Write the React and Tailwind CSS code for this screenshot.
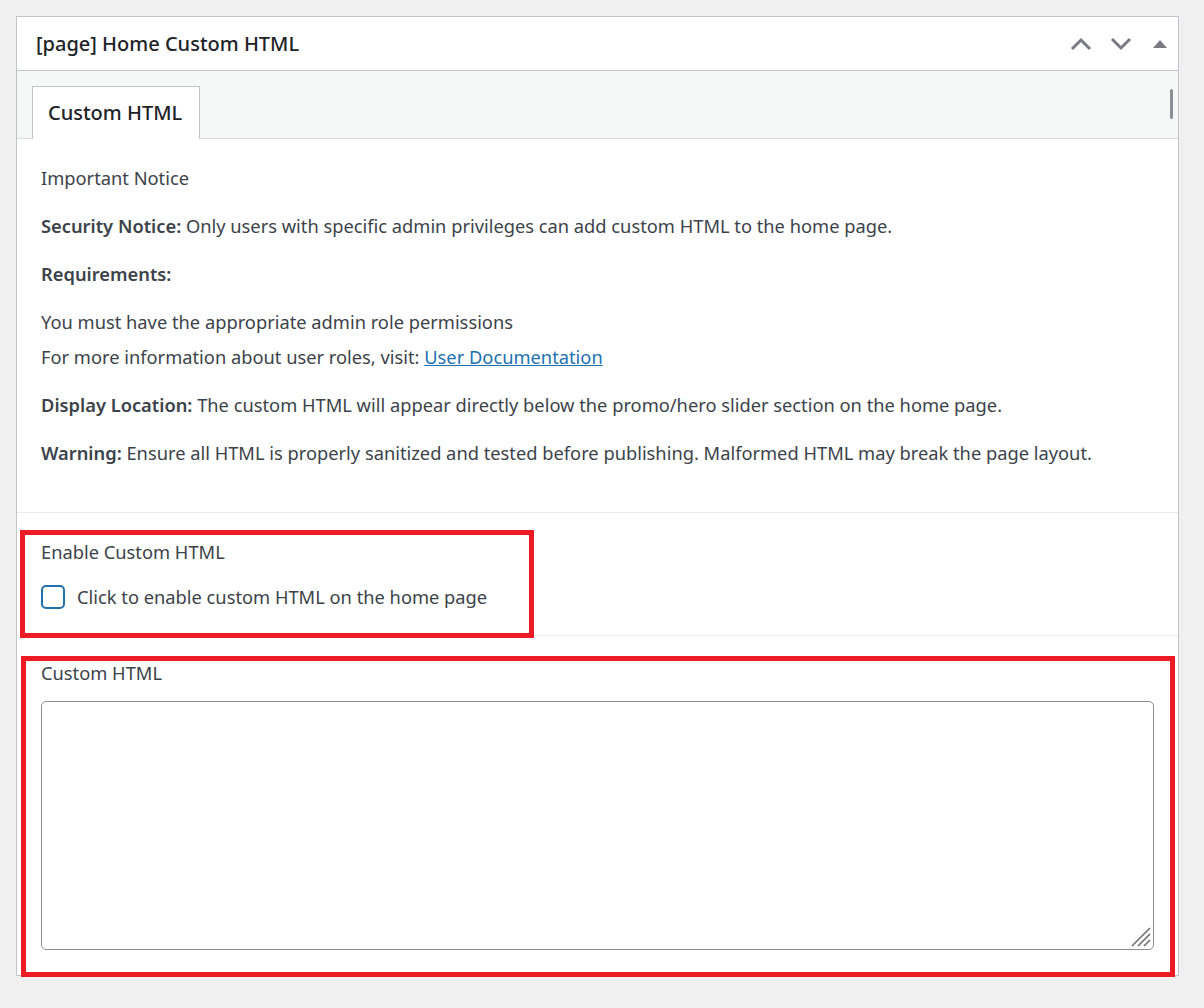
import React, { useState } from "react";

function ChevronUp() {
  return (
    <svg width="22" height="14" viewBox="0 0 22 14" fill="none">
      <path d="M2 12 L11 3 L20 12" stroke="#787c82" strokeWidth="3" />
    </svg>
  );
}

function ChevronDown() {
  return (
    <svg width="22" height="14" viewBox="0 0 22 14" fill="none">
      <path d="M2 2 L11 11 L20 2" stroke="#787c82" strokeWidth="3" />
    </svg>
  );
}

function TriangleUp() {
  return (
    <svg width="14" height="8" viewBox="0 0 14 8">
      <path d="M0 8 L7 0 L14 8 Z" fill="#787c82" />
    </svg>
  );
}

export default function App() {
  const [enabled, setEnabled] = useState(false);
  const [html, setHtml] = useState("");

  return (
    <div
      className="relative min-h-[1008px] bg-[#f0f0f1] pt-4 pl-4 text-[#3c434a]"
      style={{ fontFamily: '"Noto Sans", "Open Sans", sans-serif' }}
    >
      <div className="w-[1163px] border border-[#c3c4c7] bg-white">
        {/* Header */}
        <div className="flex h-[54px] items-center justify-between border-b border-[#c3c4c7] pl-[19px]">
          <h2 className="text-[20px] font-medium text-[#1d2327]">[page] Home Custom HTML</h2>
          <div className="flex items-center">
            <button className="flex h-9 w-10 items-center justify-center"><ChevronUp /></button>
            <button className="flex h-9 w-10 items-center justify-center"><ChevronDown /></button>
            <button className="flex h-9 w-[37px] items-center justify-center"><TriangleUp /></button>
          </div>
        </div>

        {/* Tabs */}
        <div className="relative h-[68px] border-b border-[#dcdcde] bg-[#f6f7f7] pl-[15px] pt-[15px]">
          <div className="-mb-px flex h-[53px] w-[168px] items-center border border-b-0 border-[#c3c4c7] bg-white pl-[15px] text-[20px] font-medium text-[#1d2327]">
            Custom HTML
          </div>
          <div className="absolute right-[5px] top-[18px] h-[30px] w-[3px] rounded-full bg-[#8c8f94]"></div>
        </div>

        {/* Notice */}
        <div className="flex flex-col gap-5 border-b border-[#ebebeb] px-6 pb-[45px] pt-[25px] text-[18.3px] leading-[28px]">
          <p>Important Notice</p>
          <p><b className="font-semibold">Security Notice:</b> Only users with specific admin privileges can add custom HTML to the home page.</p>
          <p><b className="font-semibold">Requirements:</b></p>
          <div className="flex flex-col gap-[7px]">
            <p>You must have the appropriate admin role permissions</p>
            <p>
              For more information about user roles, visit:{" "}
              <a href="#" className="text-[#2271b1] underline">User Documentation</a>
            </p>
          </div>
          <p><b className="font-semibold">Display Location:</b> The custom HTML will appear directly below the promo/hero slider section on the home page.</p>
          <p><b className="font-semibold">Warning:</b> Ensure all HTML is properly sanitized and tested before publishing. Malformed HTML may break the page layout.</p>
        </div>

        {/* Enable */}
        <div className="border-b border-[#ebebeb] px-6 pb-[24px] pt-[25px] text-[18.3px] leading-[28px]">
          <p>Enable Custom HTML</p>
          <label className="mt-[17px] flex items-center gap-3">
            <input
              type="checkbox"
              checked={enabled}
              onChange={(e) => setEnabled(e.target.checked)}
              className="h-6 w-6 appearance-none rounded-[5px] border-2 border-[#2271b1] bg-white"
            />
            <span>Click to enable custom HTML on the home page</span>
          </label>
        </div>

        {/* Custom HTML */}
        <div className="px-6 pb-[25px] pt-[23px] text-[18.3px] leading-[28px]">
          <p>Custom HTML</p>
          <div className="relative mt-[14px]">
            <textarea
              value={html}
              onChange={(e) => setHtml(e.target.value)}
              className="block h-[249px] w-full resize-none rounded-[5px] border border-[#8c8f94] bg-white"
            />
            <svg className="pointer-events-none absolute bottom-[2px] right-[2px]" width="24" height="24" viewBox="0 0 24 24">
              <path d="M22 4 L4 22 M22 10 L10 22 M22 16 L16 22" stroke="#6f6f6f" strokeWidth="1.6" />
            </svg>
          </div>
        </div>
      </div>

      {/* annotation boxes */}
      <div className="pointer-events-none absolute left-[20px] top-[530px] h-[108px] w-[514px] border-[5px] border-[#ed1c24]"></div>
      <div className="pointer-events-none absolute left-[21px] top-[656px] h-[321px] w-[1154px] border-[5px] border-[#ed1c24]"></div>
    </div>
  );
}
